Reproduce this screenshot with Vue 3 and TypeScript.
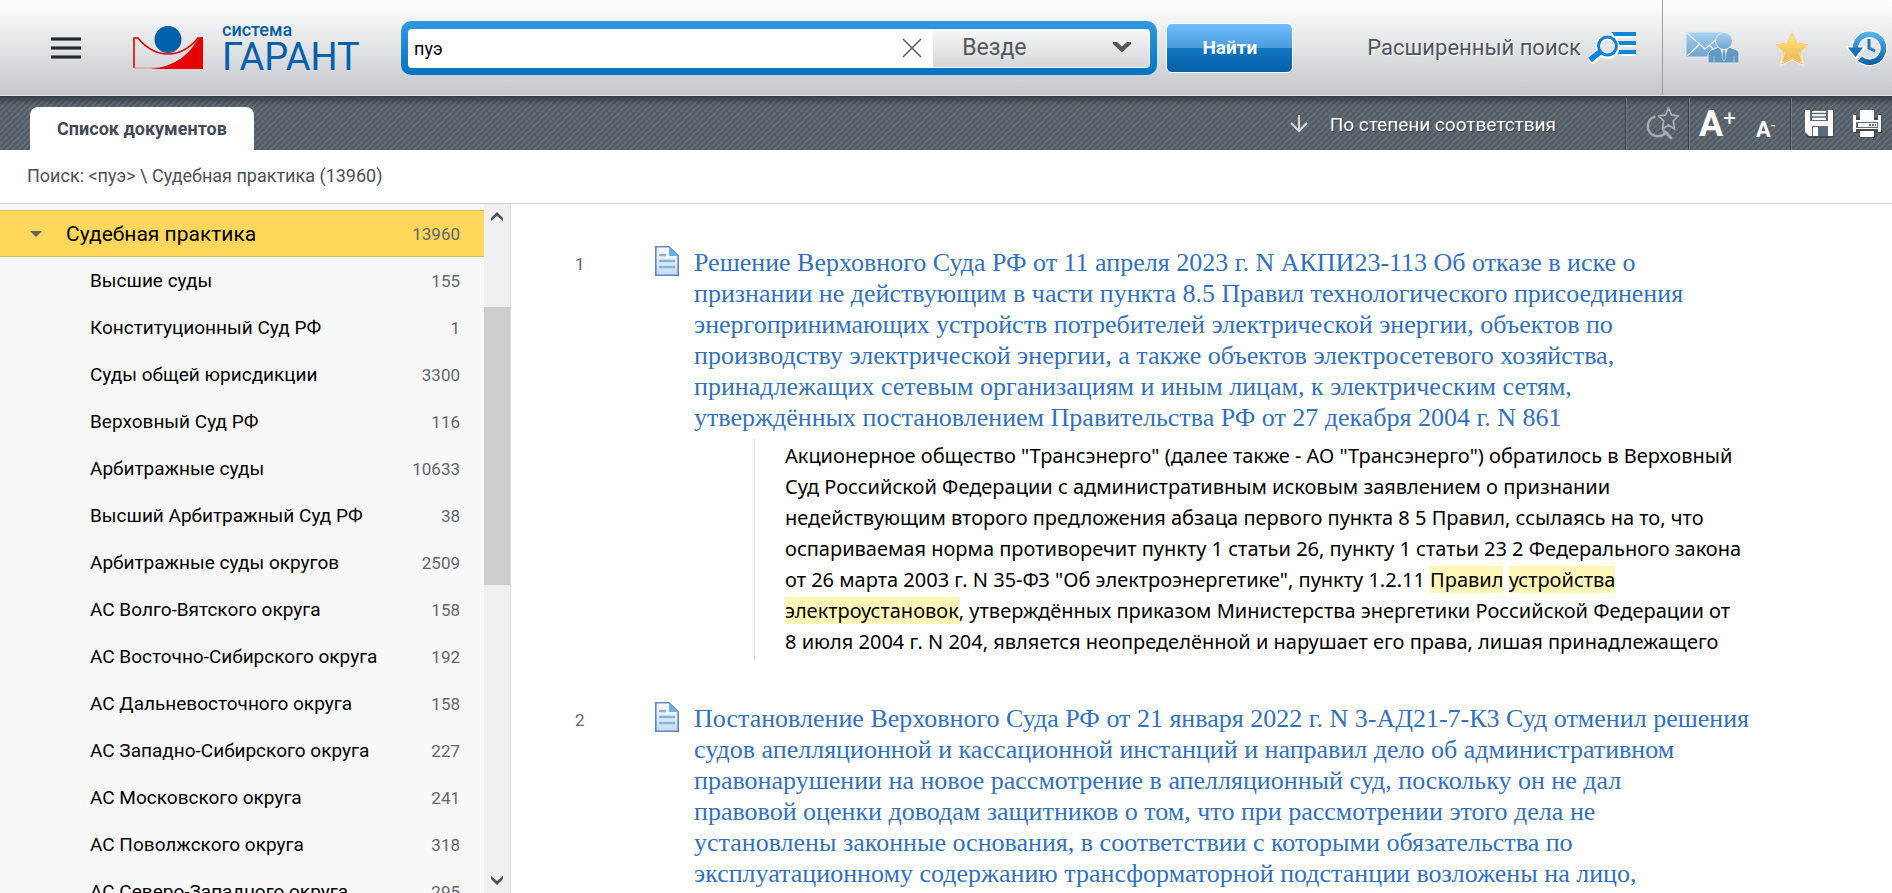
<script setup lang="ts">
import { ref } from 'vue'

interface Category {
  name: string
  count: number
}

interface Fragment {
  text: string
  mark?: boolean
}

interface DocumentItem {
  id: number
  title: string[]
  snippet: Fragment[][]
}

const query = ref('пуэ')
const scope = ref('Везде')

const categories: Category[] = [
  { name: 'Высшие суды', count: 155 },
  { name: 'Конституционный Суд РФ', count: 1 },
  { name: 'Суды общей юрисдикции', count: 3300 },
  { name: 'Верховный Суд РФ', count: 116 },
  { name: 'Арбитражные суды', count: 10633 },
  { name: 'Высший Арбитражный Суд РФ', count: 38 },
  { name: 'Арбитражные суды округов', count: 2509 },
  { name: 'АС Волго-Вятского округа', count: 158 },
  { name: 'АС Восточно-Сибирского округа', count: 192 },
  { name: 'АС Дальневосточного округа', count: 158 },
  { name: 'АС Западно-Сибирского округа', count: 227 },
  { name: 'АС Московского округа', count: 241 },
  { name: 'АС Поволжского округа', count: 318 },
  { name: 'АС Северо-Западного округа', count: 295 },
]

const documents: DocumentItem[] = [
  {
    id: 1,
    title: [
      'Решение Верховного Суда РФ от 11 апреля 2023 г. N АКПИ23-113 Об отказе в иске о',
      'признании не действующим в части пункта 8.5 Правил технологического присоединения',
      'энергопринимающих устройств потребителей электрической энергии, объектов по',
      'производству электрической энергии, а также объектов электросетевого хозяйства,',
      'принадлежащих сетевым организациям и иным лицам, к электрическим сетям,',
      'утверждённых постановлением Правительства РФ от 27 декабря 2004 г. N 861',
    ],
    snippet: [
      [{ text: 'Акционерное общество "Трансэнерго" (далее также - АО "Трансэнерго") обратилось в Верховный' }],
      [{ text: 'Суд Российской Федерации с административным исковым заявлением о признании' }],
      [{ text: 'недействующим второго предложения абзаца первого пункта 8 5 Правил, ссылаясь на то, что' }],
      [{ text: 'оспариваемая норма противоречит пункту 1 статьи 26, пункту 1 статьи 23 2 Федерального закона' }],
      [
        { text: 'от 26 марта 2003 г. N 35-ФЗ "Об электроэнергетике", пункту 1.2.11 ' },
        { text: 'Правил', mark: true },
        { text: ' ' },
        { text: 'устройства', mark: true },
      ],
      [
        { text: 'электроустановок', mark: true },
        { text: ', утверждённых приказом Министерства энергетики Российской Федерации от' },
      ],
      [{ text: '8 июля 2004 г. N 204, является неопределённой и нарушает его права, лишая принадлежащего' }],
    ],
  },
  {
    id: 2,
    title: [
      'Постановление Верховного Суда РФ от 21 января 2022 г. N 3-АД21-7-К3 Суд отменил решения',
      'судов апелляционной и кассационной инстанций и направил дело об административном',
      'правонарушении на новое рассмотрение в апелляционный суд, поскольку он не дал',
      'правовой оценки доводам защитников о том, что при рассмотрении этого дела не',
      'установлены законные основания, в соответствии с которыми обязательства по',
      'эксплуатационному содержанию трансформаторной подстанции возложены на лицо,',
    ],
    snippet: [],
  },
]
</script>

<template>
  <div class="page">
    <header class="header">
      <button class="menu" type="button" aria-label="Меню">
        <span></span><span></span><span></span>
      </button>
      <a class="logo" href="#">
        <svg class="logo-mark" viewBox="0 0 70 44" aria-hidden="true">
          <path d="M1 42V12h4c9 11 18 16 30 16s21-5 30-16h4" fill="none" stroke="#e60000" stroke-width="1.6" />
          <path d="M1 42h30" stroke="#e88" stroke-width="1" />
          <path d="M70 11v32H18c25-3 38-14 48-32z" fill="#e60000" />
          <circle cx="35" cy="13.500" r="13.500" fill="#0260a8" />
        </svg>
        <span class="logo-text"><small>система</small><b>ГАРАНТ</b></span>
      </a>
      <form class="search" @submit.prevent>
        <div class="search-box">
          <input v-model="query" type="text" aria-label="Поиск" />
          <button class="clear" type="button" aria-label="Очистить" @click="query = ''">
            <svg viewBox="0 0 20 20" aria-hidden="true"><path d="M1 1l18 18M19 1L1 19" stroke="#55575b" stroke-width="1.500" /></svg>
          </button>
          <div class="scope">
            <select v-model="scope" aria-label="Область поиска"><option>Везде</option></select>
            <svg viewBox="0 0 18 11" aria-hidden="true"><path d="M0 0h4l5 4.500L14 0h4v2L9 10.500 0 2z" fill="#55575b" /></svg>
          </div>
        </div>
        <button class="find" type="submit">Найти</button>
      </form>
      <a class="advanced" href="#">
        Расширенный поиск
        <svg viewBox="0 0 50 32" aria-hidden="true">
          <path d="M25 2h24M33 11h16M33 20h16" stroke="#fff" stroke-width="4" transform="translate(0 2)" />
          <path d="M24 0h25v4H27q-1-3-3-4zM31 9h18v4H32zM32 18h17v4H31z" fill="#0f86dc" />
          <circle cx="20.500" cy="15" r="9.500" fill="#e4e5e8" stroke="#fff" stroke-width="5" />
          <path d="M13 21L3 30" stroke="#fff" stroke-width="7" />
          <circle cx="20.500" cy="14" r="9" fill="none" stroke="#0f80dc" stroke-width="3" />
          <path d="M13 20L3 28" stroke="#0f80dc" stroke-width="5.500" />
        </svg>
      </a>
      <nav class="quick" aria-label="Личное">
        <button type="button" aria-label="Сообщения">
          <svg class="mail" viewBox="0 0 56 34" aria-hidden="true">
            <defs><linearGradient id="mailFill" x2="0" y2="1"><stop stop-color="#a9d2f0" /><stop offset="1" stop-color="#6fa3ca" /></linearGradient></defs>
            <path d="M1 1h39v25H1z" fill="url(#mailFill)" stroke="#dfeaf3" />
            <path d="M2 2l18 16L39 2M2 25l13-12M24 14l12 11" fill="none" stroke="#e8f3fb" stroke-width="1.300" />
            <path d="M23 32V23q1-4 6-5l5-2h10l5 2q5 1 5 5v9z" fill="#6699c2" stroke="#dfeaf3" />
            <path d="M35 17l4 12 4-12z" fill="#eef5fa" /><path d="M38 19h2l1 8-2 3-2-3zM29 25v6M49 25v6" fill="#6699c2" stroke="#c5dced" stroke-width=".7" />
            <circle cx="39" cy="10" r="8.500" fill="url(#mailFill)" stroke="#dfeaf3" />
          </svg>
        </button>
        <button type="button" aria-label="Избранное">
          <svg class="star" viewBox="0 0 40 38" aria-hidden="true">
            <defs><linearGradient id="starFill" x2="0" y2="1"><stop stop-color="#fae878" /><stop offset="1" stop-color="#f0b255" /></linearGradient></defs>
            <path d="M20 2l5.500 11.200L38 15l-9 8.500L31.500 37 20 31 8.500 37 11 23.500 2 15l12.500-1.800z" fill="#dfb06c" stroke="#f5e5c8" stroke-width="1.500" stroke-linejoin="round" />
            <path d="M20 5l4.600 9.600L35 16l-7.500 7L29.600 34 20 29 10.400 34l2.100-11L5 16l10.400-1.400z" fill="url(#starFill)" stroke="#f8dfa0" stroke-width=".8" />
          </svg>
        </button>
        <button type="button" aria-label="История">
          <svg class="clock" viewBox="0 0 42 38" aria-hidden="true">
            <defs><linearGradient id="clockFill" x2="0" y2="36" gradientUnits="userSpaceOnUse"><stop stop-color="#62baf8" /><stop offset="1" stop-color="#0460a8" /></linearGradient></defs>
            <path d="M9.500 20A14 14 0 1 1 14 29.500" fill="none" stroke="#fff" stroke-width="8" />
            <path d="M1 18h18l-9 11z" fill="#fff" stroke="#fff" stroke-width="2" />
            <path d="M9.500 20A14 14 0 1 1 14 29.500" fill="none" stroke="url(#clockFill)" stroke-width="5.500" />
            <path d="M2 18.500h15L9.500 28z" fill="#1573ba" />
            <path d="M23 10v9l6 3" fill="none" stroke="#2679b8" stroke-width="3" />
          </svg>
        </button>
      </nav>
    </header>

    <div class="toolbar">
      <a class="tab" href="#" aria-current="page">Список документов</a>
      <button class="sort" type="button">
        <svg viewBox="0 0 18 18" aria-hidden="true"><path d="M9 0v16M1 8l8 8 8-8" fill="none" stroke="#d4d7d6" stroke-width="2" /></svg>
        По степени соответствия
      </button>
      <div class="group lookup">
        <button type="button" aria-label="Поиск в избранном">
          <svg class="icon-lookup" viewBox="0 0 36 36" aria-hidden="true">
            <path d="M10.500 10.500A10 10 0 1 0 21 26M21 26l6 7M18 24l8 8" fill="none" stroke="#a9adb0" stroke-width="2.500" />
            <path d="M23.500 2l3 7 7 .8-5.200 5L29.500 23l-6-4-6 4 1.200-8.200-5.200-5 7-.8z" fill="#59616a" stroke="#a9adb0" stroke-width="1.800" stroke-linejoin="round" />
          </svg>
        </button>
      </div>
      <div class="group fonts">
        <button class="bigger" type="button" aria-label="Увеличить шрифт">A<sup>+</sup></button>
        <button class="smaller" type="button" aria-label="Уменьшить шрифт">A<sup>-</sup></button>
      </div>
      <div class="group output">
        <button type="button" aria-label="Сохранить">
          <svg class="icon-tool" viewBox="0 0 30 30" aria-hidden="true">
            <path d="M2 4v25h24l4-2V3" fill="#343b43" opacity=".6" />
            <path d="M1 1h28v26H5l-4-4z" fill="#fff" />
            <path d="M6 1h18v11H6z" fill="#5d6b7a" /><path d="M8 2h14v9H8z" fill="#fff" />
            <path d="M8 4.500h14M8 8h14" stroke="#5d6b7a" stroke-width="1.500" />
            <path d="M8 17h16v10H8z" fill="#5d6b7a" /><path d="M9 18h5v9H9z" fill="#fff" />
          </svg>
        </button>
        <button type="button" aria-label="Печать">
          <svg class="icon-tool" viewBox="0 0 30 30" aria-hidden="true">
            <path d="M2 8h28v16h-6v5H9v-5H2z" fill="#343b43" opacity=".6" />
            <path d="M8 1h14v10H8zM1 6h3v5h22V6h3v17h-3v-3H4v3H1zM8 22h14v6H8z" fill="#fff" />
            <path d="M4 13h22v6H4z" fill="#5d6b7a" /><path d="M6 14h19v4H6z" fill="#fff" />
            <path d="M17 16h7" stroke="#5d6b7a" stroke-width="2" stroke-dasharray="2 1" />
          </svg>
        </button>
      </div>
    </div>

    <div class="crumbs">Поиск: &lt;пуэ&gt; \ Судебная практика (13960)</div>

    <div class="body">
      <aside class="sidebar">
        <nav class="tree" aria-label="Разделы">
          <a class="node active" href="#"><i class="caret"></i><span>Судебная практика</span><em>13960</em></a>
          <a v-for="item in categories" :key="item.name" class="node" href="#">
            <span>{{ item.name }}</span><em>{{ item.count }}</em>
          </a>
        </nav>
        <div class="scrollbar" aria-hidden="true">
          <svg viewBox="0 0 14 11"><path d="M1 10V7l6-6 6 6v3L7 5z" fill="#505050" /></svg>
          <div class="track"><div class="thumb"></div></div>
          <svg viewBox="0 0 14 11"><path d="M1 1v3l6 6 6-6V1L7 6z" fill="#505050" /></svg>
        </div>
      </aside>

      <main class="results">
        <article v-for="doc in documents" :key="doc.id" class="doc">
          <span class="number">{{ doc.id }}</span>
          <svg class="doc-icon" viewBox="0 0 24 30" aria-hidden="true">
            <defs><linearGradient id="sheetFill" x2="0" y2="1"><stop stop-color="#fff" /><stop offset="1" stop-color="#c5d9f4" /></linearGradient></defs>
            <path d="M.8.8H14L23.200 10v19.200H.8z" fill="url(#sheetFill)" stroke="#6683c4" stroke-width="1.600" />
            <path d="M14 1v9h9z" fill="#6cb3e6" />
            <path d="M5 9h5M5 15h14M5 21h14" stroke="#86b5da" stroke-width="2.500" stroke-linecap="round" />
          </svg>
          <div class="doc-content">
            <a class="title" href="#"><span v-for="line in doc.title" :key="line">{{ line }}</span></a>
            <p v-if="doc.snippet.length" class="snippet">
              <span v-for="(line, i) in doc.snippet" :key="i" class="line"><template v-for="(part, k) in line" :key="k"><mark v-if="part.mark">{{ part.text }}</mark><template v-else>{{ part.text }}</template></template></span>
            </p>
          </div>
        </article>
      </main>
    </div>
  </div>
</template>

<style>
body {
  margin: 0;
  overflow: hidden;
}
</style>

<style scoped>
.page {
  height: 100vh;
  display: flex;
  flex-direction: column;
  overflow: hidden;
  background: #fff;
  color: #000;
  font-family: Roboto, "Liberation Sans", sans-serif;
}
.page * { box-sizing: border-box; }
button, input, select { font: inherit; color: inherit; border: 0; padding: 0; background: none; }
a { color: inherit; text-decoration: none; }
svg { display: block; flex: none; }

.header {
  flex: none;
  display: flex;
  align-items: center;
  height: 96px;
  padding-left: 51px;
  background: linear-gradient(#fff, #e2e3e5 50%, #c4c6cc);
  border-bottom: 1px solid #e0e1e4;
}
.menu { display: flex; flex-direction: column; gap: 5px; width: 30px; }
.menu span { height: 4px; background: #25282d; border: solid #73777c; border-width: 1px 0; }
.logo { display: flex; align-items: center; gap: 19px; width: 268px; margin-left: 52px; color: #0260a8; }
.logo-mark { width: 70px; height: 44px; }
.logo-text { display: flex; flex-direction: column; }
.logo-text small { font-size: 18px; line-height: 18px; font-weight: 500; }
.logo-text b { font-size: 38px; line-height: 36px; font-weight: 400; }
.search { flex: 1; display: flex; align-items: center; gap: 9px; }
.search-box {
  flex: 1;
  display: flex;
  height: 54px;
  padding: 8px 7px 7px;
  border-radius: 10px;
  background: linear-gradient(#3399df, #0074c2);
}
.search-box input {
  flex: 1;
  min-width: 0;
  padding: 0 6px;
  background: #fff;
  border-radius: 4px 0 0 4px;
  font-size: 18px;
  outline: 0;
}
.clear { display: grid; place-items: center; width: 42px; background: #fff; }
.clear svg { width: 20px; height: 20px; }
.scope {
  display: flex;
  align-items: center;
  width: 217px;
  padding: 0 18px 0 29px;
  border: solid #fff;
  border-width: 0 1px 1px 0;
  border-radius: 0 4px 4px 0;
  background: linear-gradient(#f7f8f8, #d5d7da);
  color: #55575b;
}
.scope select { flex: 1; appearance: none; outline: 0; font-size: 23px; }
.scope svg { width: 18px; height: 11px; }
.find {
  width: 127px;
  height: 50px;
  border: 1px solid #fff;
  border-radius: 6px;
  background: linear-gradient(#6dbcff, #4b9ddb 50%, #1177c1 50%, #0460a5);
  color: #fff;
  font-size: 19px;
  font-weight: 700;
}
.advanced {
  display: flex;
  align-items: center;
  gap: 6px;
  margin-left: 74px;
  color: #50555f;
  font-size: 22px;
  text-shadow: 1px 1px 1px #fff;
  white-space: nowrap;
}
.advanced svg { width: 50px; height: 32px; }
.quick {
  display: flex;
  align-items: center;
  height: 95px;
  margin-left: 25px;
  padding: 0 4px 0 22px;
  border-left: 1px solid #9a9ea5;
}
.mail { width: 56px; height: 34px; }
.star { width: 40px; height: 38px; margin: 0 34px 0 31px; }
.clock { width: 42px; height: 38px; }

.toolbar {
  flex: none;
  display: flex;
  align-items: flex-end;
  height: 54px;
  padding-left: 30px;
  background:
    linear-gradient(#343b43, #343b4300 9px),
    linear-gradient(135deg, #66717a 8%, #535d66 12% 38%, #66717a 46% 54%, #535d66 62% 88%, #66717a 92%) 0 0 / 6px 6px;
}
.tab {
  width: 224px;
  height: 43px;
  border-radius: 8px 8px 0 0;
  background: #fff;
  color: #434956;
  font-size: 18px;
  font-weight: 700;
  line-height: 43px;
  text-align: center;
}
.sort {
  display: flex;
  align-items: center;
  gap: 22px;
  height: 52px;
  margin-left: auto;
  color: #fff;
  font-size: 19px;
  text-shadow: 1px 1px 1px #333a42;
}
.sort svg { width: 18px; height: 18px; }
.group {
  display: flex;
  align-items: center;
  height: 52px;
  border-left: 1px solid #747c85;
  box-shadow: -1px 0 #3a424b;
}
.lookup { width: 63px; margin-left: 70px; padding-left: 18px; }
.icon-lookup { width: 36px; height: 36px; }
.fonts { width: 102px; padding-left: 9px; color: #fff; text-shadow: 2px 1px 1px #343b43; }
.fonts button { display: flex; font-weight: 700; line-height: 36px; }
.fonts .bigger { width: 57px; font-size: 36px; }
.fonts .smaller { font-size: 22px; padding-top: 12px; line-height: 24px; }
.fonts sup { font-size: 22px; line-height: 26px; font-weight: 400; }
.fonts .smaller sup { font-size: 16px; line-height: 16px; }
.output { gap: 18px; width: 101px; padding-left: 12px; }
.icon-tool { width: 30px; height: 30px; }

.crumbs {
  flex: none;
  height: 54px;
  padding: 0 27px;
  border-bottom: 1px solid #d0d0d0;
  color: #4b5058;
  font-size: 18px;
  line-height: 52px;
}
.body { flex: 1; min-height: 0; display: flex; }
.sidebar {
  flex: none;
  display: flex;
  width: 511px;
  border-right: 1px solid #ddd;
  background: #f8f8f8;
}
.tree { flex: 1; overflow: hidden; padding-top: 6px; }
.node {
  display: flex;
  align-items: center;
  height: 47px;
  padding: 0 24px 0 90px;
  font-size: 19px;
}
.node span { flex: 1; white-space: nowrap; }
.node em { color: #62666f; font-size: 17px; font-style: normal; }
.node.active {
  padding-left: 30px;
  border: solid #dcb954;
  border-width: 1px 0;
  background: #ffd75b;
  font-size: 21px;
}
.caret {
  width: 12px;
  margin-right: 24px;
  border: solid transparent;
  border-width: 6px 6px 0;
  border-top-color: #5d6068;
}
.scrollbar {
  display: flex;
  flex-direction: column;
  align-items: center;
  width: 26px;
  padding: 7px 0;
  background: #f0f0f0;
}
.scrollbar svg { width: 14px; height: 11px; }
.track { flex: 1; width: 26px; padding-top: 85px; }
.thumb { height: 49%; background: #cdcdcd; }

.results { flex: 1; min-width: 0; overflow: hidden; padding: 42px 48px 0 64px; }
.doc { display: flex; align-items: flex-start; margin-bottom: 43px; }
.number { flex: none; width: 80px; color: #666; font-size: 17px; line-height: 36px; }
.doc-icon { width: 24px; height: 30px; }
.doc-content { flex: 1; min-width: 0; margin-left: 15px; padding-top: 1px; }
.title { display: block; color: #3171c1; font-family: "Liberation Serif", serif; font-size: 26px; line-height: 31px; }
.title span, .line { display: block; white-space: pre; }
.snippet {
  margin: 6px 0 0 60px;
  padding: 1px 0 2px 30px;
  border-left: 1px solid #ddd;
  font-family: "Noto Sans", sans-serif;
  font-size: 20px;
  line-height: 31px;
}
mark { background: #fff7b8; color: inherit; }
</style>
